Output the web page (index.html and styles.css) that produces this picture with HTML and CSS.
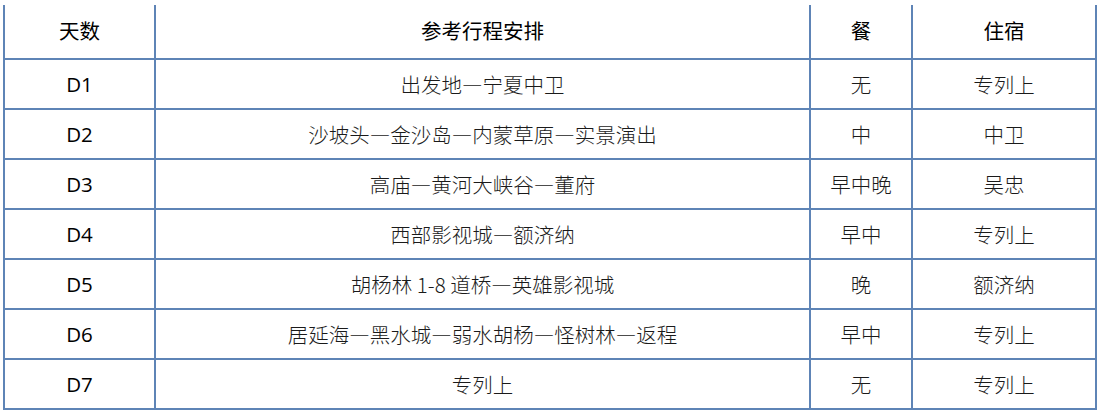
FILE: index.html
```html
<!DOCTYPE html>
<html lang="zh">
<head>
<meta charset="utf-8">
<link rel="stylesheet" href="styles.css">
</head>
<body>
<table class="plan">
  <colgroup>
    <col class="c-day"><col class="c-route"><col class="c-meal"><col class="c-stay">
  </colgroup>
  <thead>
    <tr><th>天数</th><th>参考行程安排</th><th>餐</th><th>住宿</th></tr>
  </thead>
  <tbody>
    <tr><td class="day">D1</td><td>出发地—宁夏中卫</td><td>无</td><td>专列上</td></tr>
    <tr><td class="day">D2</td><td>沙坡头—金沙岛—内蒙草原—实景演出</td><td>中</td><td>中卫</td></tr>
    <tr><td class="day">D3</td><td>高庙—黄河大峡谷—董府</td><td>早中晚</td><td>吴忠</td></tr>
    <tr><td class="day">D4</td><td>西部影视城—额济纳</td><td>早中</td><td>专列上</td></tr>
    <tr><td class="day">D5</td><td>胡杨林 1-8 道桥—英雄影视城</td><td>晚</td><td>额济纳</td></tr>
    <tr><td class="day">D6</td><td>居延海—黑水城—弱水胡杨—怪树林—返程</td><td>早中</td><td>专列上</td></tr>
    <tr><td class="day">D7</td><td>专列上</td><td>无</td><td>专列上</td></tr>
  </tbody>
</table>
</body>
</html>
```

FILE: styles.css
```css
html, body {
  margin: 0;
  padding: 0;
  background: #ffffff;
}
body {
  padding: 5px 0 0 3px;
  font-family: "Noto Sans CJK SC", sans-serif;
  color: #000;
}
.plan {
  border-collapse: collapse;
  width: 1092px;
  table-layout: fixed;
}
.c-day { width: 151px; }
.c-route { width: 655px; }
.c-meal { width: 102px; }
.c-stay { width: 184px; }

.plan th, .plan td {
  border: 2px solid #5e84b6;
  text-align: center;
  vertical-align: middle;
  padding: 0;
  font-size: 20.5px;
  line-height: 1.2;
}
.plan thead th {
  border-top: none;
  height: 51px;
  font-weight: 400;
  padding-bottom: 2px;
}
.plan td {
  height: 48px;
  font-weight: 300;
  color: #1a1a1a;
}
.plan td.day {
  font-family: "Open Sans", sans-serif;
  font-weight: 400;
  color: #000;
}
```
